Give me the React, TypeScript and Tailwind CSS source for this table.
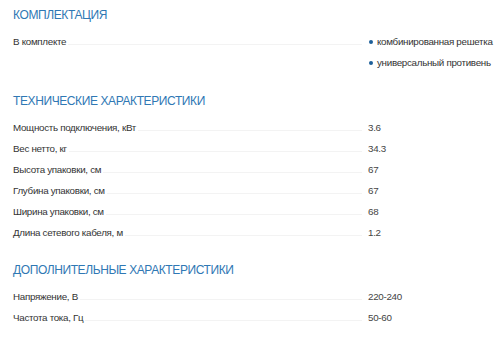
import React from "react";

interface Spec {
  label: string;
  value: string;
}

const tech: Spec[] = [
  { label: "Мощность подключения, кВт", value: "3.6" },
  { label: "Вес нетто, кг", value: "34.3" },
  { label: "Высота упаковки, см", value: "67" },
  { label: "Глубина упаковки, см", value: "67" },
  { label: "Ширина упаковки, см", value: "68" },
  { label: "Длина сетевого кабеля, м", value: "1.2" },
];

const extra: Spec[] = [
  { label: "Напряжение, В", value: "220-240" },
  { label: "Частота тока, Гц", value: "50-60" },
];

const kit = ["комбинированная решетка", "универсальный противень"];

function Heading({ children }: { children: React.ReactNode }) {
  return (
    <h2 className="text-[12px] leading-[20px] text-[#2f78b4] tracking-[-0.4px]">
      {children}
    </h2>
  );
}

function Label({ children }: { children: React.ReactNode }) {
  return (
    <div className="flex w-[349px] shrink-0 items-baseline">
      <span className="whitespace-nowrap">{children}</span>
      <div className="ml-[2px] flex-1 border-b border-[#f3f3f3]" />
    </div>
  );
}

function Row({ label, value }: Spec) {
  return (
    <div className="flex h-[21px] items-center">
      <Label>{label}</Label>
      <span className="ml-[6px] text-[#444]">{value}</span>
    </div>
  );
}

export default function App() {
  return (
    <div
      className="h-[348px] w-[500px] overflow-hidden bg-white px-[13px] pt-[5px] text-[9.8px] tracking-[-0.3px] text-[#333]"
      style={{ fontFamily: '"Liberation Sans", Arial, sans-serif' }}
    >
      {/* Комплектация */}
      <Heading>КОМПЛЕКТАЦИЯ</Heading>
      <div className="mt-[6.5px] flex">
        <div className="flex h-[21px] items-center">
          <Label>В комплекте</Label>
        </div>
        <ul className="ml-[6px]">
          {kit.map((item) => (
            <li key={item} className="flex h-[21px] items-center gap-[4px] whitespace-nowrap">
              <span className="ml-[1px] h-[4px] w-[4px] rounded-full bg-[#1d5f99]" />
              {item}
            </li>
          ))}
        </ul>
      </div>

      {/* Технические характеристики */}
      <div className="mt-[17.5px]">
        <Heading>ТЕХНИЧЕСКИЕ ХАРАКТЕРИСТИКИ</Heading>
      </div>
      <div className="mt-[6.5px]">
        {tech.map((s) => (
          <Row key={s.label} {...s} />
        ))}
      </div>

      {/* Дополнительные характеристики */}
      <div className="mt-[16px]">
        <Heading>ДОПОЛНИТЕЛЬНЫЕ ХАРАКТЕРИСТИКИ</Heading>
      </div>
      <div className="mt-[7px]">
        {extra.map((s) => (
          <Row key={s.label} {...s} />
        ))}
      </div>
    </div>
  );
}
